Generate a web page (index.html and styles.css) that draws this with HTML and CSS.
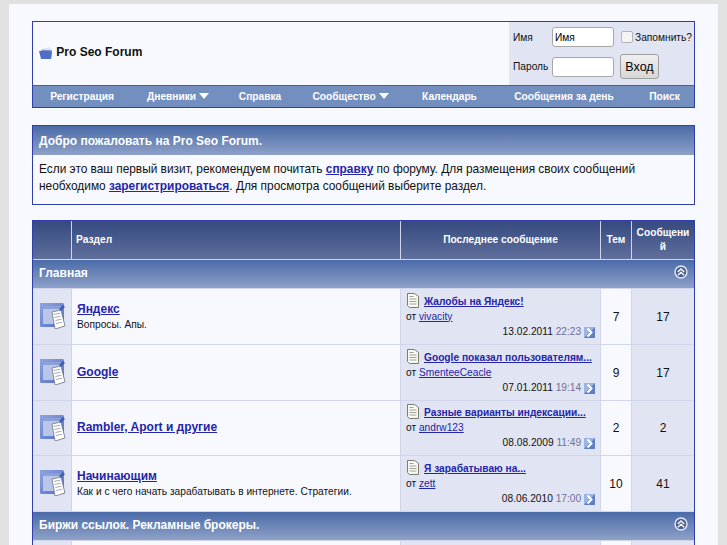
FILE: index.html
```html
<!DOCTYPE html>
<html lang="ru">
<head>
  <meta charset="UTF-8" />
  <title>Pro Seo Forum</title>
  <link rel="stylesheet" href="styles.css">
</head>
<body>
  <svg class="sprites" width="0" height="0">
    <symbol id="forum-icon" viewBox="0 0 26 27">
      <defs>
        <linearGradient id="frame" x1="0" y1="0" x2="1" y2="1">
          <stop offset="0" stop-color="#8fa3dc"/>
          <stop offset="1" stop-color="#5570c8"/>
        </linearGradient>
      </defs>
      <path d="M0 1h23l1 1v23H1l-1-1z" fill="url(#frame)"/>
      <rect x="3" y="4" width="18" height="18" fill="#b9c6e8"/>
      <rect x="3" y="4" width="18" height="3" fill="#8c9fd6"/>
      <path d="M12 10l9-2 4 16-10 3z" fill="#fff" stroke="#6c7285" stroke-width=".8"/>
      <path d="M14 12.500l6-1.300M14.700 15.500l6-1.300M15.400 18.500l6-1.300M16.100 21.500l6-1.300" stroke="#8b90a0" stroke-width=".8"/>
      <path d="M19 7l4-4 2 2-4 4z" fill="#3f5fb0"/>
    </symbol>
    <symbol id="post-icon" viewBox="0 0 13 15">
      <path d="M1.500 .5h7l4 3v11h-9l-2-2z" fill="#fafaf4" stroke="#6f6f62" stroke-width=".9"/>
      <path d="M3.500 3.500h4M3.500 6h7M3.500 8.500h7M3.500 11h7" stroke="#a0a096"/>
    </symbol>
    <symbol id="last-icon" viewBox="0 0 11 11">
      <rect width="11" height="11" fill="#5d80c4"/>
      <path d="M0 0h11L0 11z" fill="#9cb5e2"/>
      <path d="M3.500 1.500l4 4-4 4" fill="none" stroke="#fff" stroke-width="2"/>
    </symbol>
    <symbol id="collapse-icon" viewBox="0 0 14 14">
      <circle cx="7" cy="7" r="6" fill="#4c6296" stroke="#e4e8f4" stroke-width="1.400"/>
      <path d="M3.800 7l3.200-3 3.200 3M3.800 10.300l3.200-3 3.200 3" fill="none" stroke="#fff" stroke-width="1.300"/>
    </symbol>
    <symbol id="folder-icon" viewBox="0 0 14 12">
      <path d="M2 3l4-1 1 1h6l-1 8H3z" fill="#7d93d2"/>
      <path d="M0 4h10l3 1-1 7H2z" fill="#4f6ec8"/>
      <path d="M4 2l7-2 1 3H6z" fill="#dbe2f2"/>
    </symbol>
  </svg>

  <div class="page">
    <table class="tborder header" cellspacing="0">
      <tr>
        <td class="logo">
          <svg class="folder"><use href="#folder-icon"/></svg>
          <b>Pro Seo Forum</b>
        </td>
        <td class="login">
          <form class="login-form">
            <label class="login-label">Имя</label>
            <input class="field" type="text" value="Имя">
            <label class="remember"><input type="checkbox"> Запомнить?</label>
            <label class="login-label">Пароль</label>
            <input class="field" type="password">
            <button class="submit" type="button">Вход</button>
          </form>
        </td>
      </tr>
      <tr>
        <td class="nav-cell" colspan="2">
          <div class="nav">
            <a href="#">Регистрация</a>
            <a href="#">Дневники <i class="caret"></i></a>
            <a href="#">Справка</a>
            <a href="#">Сообщество <i class="caret"></i></a>
            <a href="#">Календарь</a>
            <a href="#">Сообщения за день</a>
            <a href="#">Поиск</a>
          </div>
        </td>
      </tr>
    </table>

    <div class="tborder welcome">
      <div class="tcat welcome-title">Добро пожаловать на Pro Seo Forum.</div>
      <div class="welcome-text">
        Если это ваш первый визит, рекомендуем почитать <a href="#"><b>справку</b></a> по форуму. Для размещения своих сообщений необходимо <a href="#"><b>зарегистрироваться</b></a>. Для просмотра сообщений выберите раздел.
      </div>
    </div>

    <table class="forums" cellspacing="1">
      <colgroup>
        <col class="col-icon"><col class="col-forum"><col class="col-last"><col class="col-threads"><col class="col-posts">
      </colgroup>
      <tr class="thead">
        <th></th>
        <th class="left">Раздел</th>
        <th>Последнее сообщение</th>
        <th>Тем</th>
        <th>Сообщений</th>
      </tr>

      <tr>
        <td class="tcat cat" colspan="5">Главная <svg class="collapse"><use href="#collapse-icon"/></svg></td>
      </tr>

      <tr class="forum">
        <td class="alt2 icon"><svg class="forum-icon"><use href="#forum-icon"/></svg></td>
        <td class="alt1">
          <a class="forum-name" href="#">Яндекс</a>
          <div class="desc">Вопросы. Апы.</div>
        </td>
        <td class="alt2 last">
          <div class="last-title"><svg class="post-icon"><use href="#post-icon"/></svg><a href="#">Жалобы на Яндекс!</a></div>
          <div>от <a href="#">vivacity</a></div>
          <div class="last-date">13.02.2011 <span class="time">22:23</span> <svg class="last-icon"><use href="#last-icon"/></svg></div>
        </td>
        <td class="alt1 num">7</td>
        <td class="alt2 num">17</td>
      </tr>

      <tr class="forum">
        <td class="alt2 icon"><svg class="forum-icon"><use href="#forum-icon"/></svg></td>
        <td class="alt1">
          <a class="forum-name" href="#">Google</a>
        </td>
        <td class="alt2 last">
          <div class="last-title"><svg class="post-icon"><use href="#post-icon"/></svg><a href="#">Google показал пользователям...</a></div>
          <div>от <a href="#">SmenteeCeacle</a></div>
          <div class="last-date">07.01.2011 <span class="time">19:14</span> <svg class="last-icon"><use href="#last-icon"/></svg></div>
        </td>
        <td class="alt1 num">9</td>
        <td class="alt2 num">17</td>
      </tr>

      <tr class="forum short">
        <td class="alt2 icon"><svg class="forum-icon"><use href="#forum-icon"/></svg></td>
        <td class="alt1">
          <a class="forum-name" href="#">Rambler, Aport и другие</a>
        </td>
        <td class="alt2 last">
          <div class="last-title"><svg class="post-icon"><use href="#post-icon"/></svg><a href="#">Разные варианты индексации...</a></div>
          <div>от <a href="#">andrw123</a></div>
          <div class="last-date">08.08.2009 <span class="time">11:49</span> <svg class="last-icon"><use href="#last-icon"/></svg></div>
        </td>
        <td class="alt1 num">2</td>
        <td class="alt2 num">2</td>
      </tr>

      <tr class="forum">
        <td class="alt2 icon"><svg class="forum-icon"><use href="#forum-icon"/></svg></td>
        <td class="alt1">
          <a class="forum-name" href="#">Начинающим</a>
          <div class="desc">Как и с чего начать зарабатывать в интернете. Стратегии.</div>
        </td>
        <td class="alt2 last">
          <div class="last-title"><svg class="post-icon"><use href="#post-icon"/></svg><a href="#">Я зарабатываю на...</a></div>
          <div>от <a href="#">zett</a></div>
          <div class="last-date">08.06.2010 <span class="time">17:00</span> <svg class="last-icon"><use href="#last-icon"/></svg></div>
        </td>
        <td class="alt1 num">10</td>
        <td class="alt2 num">41</td>
      </tr>

      <tr>
        <td class="tcat cat" colspan="5">Биржи ссылок. Рекламные брокеры. <svg class="collapse"><use href="#collapse-icon"/></svg></td>
      </tr>

      <tr class="forum">
        <td class="alt2 icon"></td>
        <td class="alt1"></td>
        <td class="alt2 last"></td>
        <td class="alt1 num"></td>
        <td class="alt2 num"></td>
      </tr>
    </table>
  </div>
</body>
</html>
```

FILE: styles.css
```css
html, body {
  height: 545px;
  overflow: hidden;
}

body {
  margin: 0;
  padding: 4px 9px 0;
  box-sizing: border-box;
  background: #e1e1e2;
  color: #111;
  font: 10.2px "Liberation Sans", Arial, sans-serif;
}

a {
  color: #2525a8;
}

.sprites {
  position: absolute;
}

.page {
  background: #f7f9ff;
  padding: 17px 23px 0;
  height: 541px;
  overflow: hidden;
}

.tborder {
  width: 663px;
  border: 1px solid #2f3ea8;
  box-sizing: border-box;
}

/* ===== header ===== */
.header {
  border-collapse: separate;
  border-spacing: 0;
  table-layout: fixed;
}

.header td {
  padding: 0;
}

.logo {
  height: 63px;
  padding: 0 0 3px 6px !important;
  box-sizing: border-box;
  vertical-align: middle;
  font-size: 12px;
}

.folder {
  width: 14px;
  height: 12px;
  vertical-align: -3px;
}

.login {
  width: 185px;
  background: #e1e4f2;
}

.login-form {
  display: grid;
  grid-template-columns: 39px 62px auto;
  column-gap: 0;
  row-gap: 7px;
  align-items: center;
  padding: 5px 0 6px 4px;
  font-size: 10.2px;
}

.field {
  width: 62px;
  height: 20px;
  margin: 0;
  padding: 0 2px;
  box-sizing: border-box;
  border: 1px solid #a8a8a8;
  border-radius: 3px;
  background: #fff;
  font: 10.2px "Liberation Sans", sans-serif;
}

.remember {
  display: flex;
  align-items: center;
  gap: 2px;
  margin-left: 7px;
  white-space: nowrap;
}

.remember input {
  appearance: none;
  width: 12px;
  height: 12px;
  margin: 0;
  border: 1px solid #b4b4b4;
  border-radius: 2px;
  background: #f4f4f4;
}

.submit {
  width: 39px;
  height: 25px;
  margin-left: 6px;
  padding: 0;
  border: 1px solid #a0a0a0;
  border-radius: 3px;
  background: linear-gradient(#f0f0f0, #d6d6d6);
  font: 12.5px "Liberation Sans", sans-serif;
}

.nav-cell {
  background: #738fbf;
  border-top: 1px solid #4a5cab;
}

.nav {
  display: grid;
  grid-template-columns: 98px 94px 70px 111px 87px 142px 59px;
  align-items: center;
  height: 21px;
  text-align: center;
}

.nav a {
  color: #fff;
  font-weight: bold;
  text-decoration: none;
}

.caret {
  display: inline-block;
  border: 5px solid transparent;
  border-top: 6px solid #fff;
  border-bottom: 0;
  vertical-align: 1px;
}

/* ===== welcome ===== */
.welcome {
  margin-top: 17px;
  height: 80px;
}

.tcat {
  background: linear-gradient(#4a6ba8, #8ea1c8);
  color: #fff;
  font-weight: bold;
  font-size: 12px;
}

.welcome-title {
  height: 29px;
  line-height: 31px;
  padding-left: 6px;
}

.welcome-text {
  padding: 6px 6px 4px;
  font-size: 11.88px;
  line-height: 17px;
}

/* ===== forums table ===== */
.forums {
  width: 663px;
  margin-top: 15px;
  background: #d1d5ea;
  box-shadow: inset 0 0 0 1px #2f3ea8;
  table-layout: fixed;
  border-spacing: 1px;
}

.col-icon { width: 38px; }
.col-forum { width: 328px; }
.col-last { width: 199px; }
.col-threads { width: 30px; }

.thead th {
  height: 38px;
  box-sizing: border-box;
  padding: 0 3px 1px;
  background: linear-gradient(#354a80, #5f6f9c);
  color: #fff;
  font-size: 10.2px;
  line-height: 14px;
  word-break: break-all;
}

.thead .left {
  padding-left: 4px;
  text-align: left;
}

.cat {
  height: 28px;
  box-sizing: border-box;
  padding: 0 6px 2px;
  position: relative;
}

.collapse {
  position: absolute;
  right: 6px;
  top: 5px;
  width: 14px;
  height: 14px;
}

.alt1 {
  background: #f7f9ff;
}

.alt2 {
  background: #e1e4f2;
}

.forum td {
  height: 55px;
  box-sizing: border-box;
  padding: 0 5px 2px;
}

.forum.short td {
  height: 54px;
}

.forum .icon {
  padding: 0 0 2px 1px;
}

.forum .num {
  padding-bottom: 0;
}

.forum-icon {
  width: 26px;
  height: 27px;
  display: block;
  margin: 0 auto;
}

.forum-name {
  font-weight: bold;
  font-size: 12px;
}

.desc {
  margin-top: 3px;
}

.last {
  line-height: 15px;
}

.last-title {
  white-space: nowrap;
}

.last-title a {
  font-weight: bold;
}

.post-icon {
  width: 13px;
  height: 15px;
  margin-right: 5px;
  vertical-align: -3px;
}

.last-date {
  text-align: right;
}

.time {
  color: #70709a;
}

.last-icon {
  width: 11px;
  height: 11px;
  vertical-align: -3px;
}

.num {
  text-align: center;
  font-size: 12px;
}
```
